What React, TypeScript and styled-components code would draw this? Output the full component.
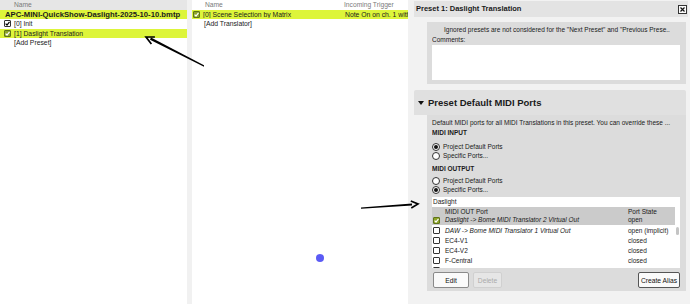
import styled, { createGlobalStyle } from "styled-components";

const YELLOW = "#ddf53a";

const GlobalStyle = createGlobalStyle`
  html, body {
    margin: 0;
    padding: 0;
  }
  body {
    width: 690px;
    height: 304px;
    overflow: hidden;
    background: #fff;
    color: #1a1a1a;
    font-family: "Liberation Sans", Arial, sans-serif;
    font-size: 6.7px;
  }
`;

const Page = styled.div`
  position: relative;
  display: flex;
  height: 304px;
`;

const Pane = styled.div<{ $width: number }>`
  width: ${(p) => p.$width}px;
  flex-shrink: 0;
  display: flex;
  flex-direction: column;
  background: #fff;
  overflow: hidden;
`;

const Splitter = styled.div`
  width: 5px;
  flex-shrink: 0;
  background: #f1f1f1;
`;

const HeaderRow = styled.div<{ $bg?: string }>`
  height: 9.5px;
  display: flex;
  align-items: center;
  background: ${(p) => p.$bg || "transparent"};
  color: #7a7a7a;
  white-space: nowrap;
`;

const HeaderCell = styled.div<{ $width?: number; $indent?: number }>`
  width: ${(p) => (p.$width ? `${p.$width}px` : "auto")};
  padding-left: ${(p) => p.$indent ?? 0}px;
  box-sizing: border-box;
  flex-shrink: 0;
`;

const Row = styled.div<{ $hl?: boolean; $bold?: boolean; $indent?: number }>`
  height: 9.5px;
  display: flex;
  align-items: center;
  gap: 3px;
  padding-left: ${(p) => p.$indent ?? 0}px;
  background: ${(p) => (p.$hl ? YELLOW : "transparent")};
  font-weight: ${(p) => (p.$bold ? "bold" : "normal")};
  font-size: ${(p) => (p.$bold ? "7.7px" : "6.8px")};
  white-space: nowrap;
  overflow: hidden;
`;

const Cell = styled.span<{ $width: number }>`
  width: ${(p) => p.$width}px;
  flex-shrink: 0;
  overflow: hidden;
  white-space: nowrap;
`;

const Box = styled.span<{ $on?: boolean; $green?: boolean }>`
  width: 5px;
  height: 5px;
  flex-shrink: 0;
  display: inline-flex;
  align-items: center;
  justify-content: center;
  border: 1px solid ${(p) => (p.$green ? "#5f7418" : "#333")};
  border-radius: 1px;
  background: ${(p) => (p.$green ? "#8ea52a" : "#fff")};
  svg {
    display: ${(p) => (p.$on ? "block" : "none")};
  }
`;

const Check = ({ on, green }: { on?: boolean; green?: boolean }) => (
  <Box $on={on} $green={green}>
    <svg width="5" height="5" viewBox="0 0 5 5">
      <path d="M0.6 2.6 L2 4 L4.5 0.8" fill="none" stroke={green ? "#fff" : "#000"} strokeWidth="1.2" />
    </svg>
  </Box>
);

const RightPane = styled.div`
  flex: 1;
  display: flex;
  flex-direction: column;
  background: #f2f2f2;
  padding: 1px 2px 0 6px;
  overflow: hidden;
`;

const TitleBar = styled.div`
  height: 16px;
  flex-shrink: 0;
  display: flex;
  align-items: center;
  justify-content: space-between;
  padding: 0 1px 0 2px;
  background: #e3e3e3;
  font-weight: bold;
  font-size: 7.5px;
  line-height: 10px;
`;

const CloseBtn = styled.span`
  width: 7px;
  height: 7px;
  display: flex;
  align-items: center;
  justify-content: center;
  border: 1px solid #333;
  background: #fafafa;
  svg {
    display: block;
  }
`;

const Card = styled.div<{ $top?: number }>`
  margin: ${(p) => p.$top ?? 0}px 2px 0 13px;
  padding: 3px 6px 3px 5px;
  background: #dcdcdc;
  display: flex;
  flex-direction: column;
  flex-shrink: 0;
`;

const Line = styled.div<{ $indent?: number; $bold?: boolean; $top?: number }>`
  height: 10px;
  line-height: 10px;
  padding-left: ${(p) => p.$indent ?? 0}px;
  margin-top: ${(p) => p.$top ?? 0}px;
  font-weight: ${(p) => (p.$bold ? "bold" : "normal")};
  font-size: 6.5px;
  white-space: nowrap;
  overflow: hidden;
`;

const TextArea = styled.div`
  height: 35px;
  background: #fff;
  margin-bottom: 1px;
`;

const SectionHeader = styled.div`
  margin: 6px 2px 0 0;
  height: 25px;
  flex-shrink: 0;
  display: flex;
  align-items: center;
  gap: 4px;
  padding-left: 4px;
  background: #e0e0e0;
  border-radius: 2px 2px 0 0;
  font-weight: bold;
  font-size: 9.5px;
`;

const Triangle = styled.span`
  width: 0;
  height: 0;
  border-left: 3px solid transparent;
  border-right: 3px solid transparent;
  border-top: 4px solid #111;
`;

const RadioRow = styled.div<{ $top?: number }>`
  height: 9px;
  display: flex;
  align-items: center;
  gap: 3px;
  margin-top: ${(p) => p.$top ?? 0}px;
  font-size: 6.5px;
`;

const RadioDot = styled.span<{ $on?: boolean }>`
  width: 6px;
  height: 6px;
  border: 1px solid #333;
  border-radius: 50%;
  background: #fff;
  display: inline-flex;
  align-items: center;
  justify-content: center;
  &::after {
    content: "";
    width: 4px;
    height: 4px;
    border-radius: 50%;
    background: ${(p) => (p.$on ? "#111" : "transparent")};
  }
`;

const FilterInput = styled.div`
  margin-top: 3px;
  height: 10px;
  line-height: 10px;
  padding-left: 1px;
  background: #fff;
  font-size: 6.5px;
`;

const List = styled.div`
  display: flex;
  height: 61px;
  background: #fff;
  overflow: hidden;
`;

const Table = styled.div`
  flex: 1;
  display: flex;
  flex-direction: column;
  overflow: hidden;
  font-size: 6.5px;
`;

const TableHead = styled.div`
  height: 17px;
  flex-shrink: 0;
  background: #cbcbcb;
  display: grid;
  grid-template-columns: 13px 183px 1fr;
  grid-template-rows: 8px 8px;
  align-items: center;
  padding-top: 1px;
  line-height: 8px;
`;

const TableRow = styled.div`
  height: 10px;
  flex-shrink: 0;
  display: grid;
  grid-template-columns: 13px 183px 1fr;
  align-items: center;
  white-space: nowrap;
`;

const BoxCell = styled.span`
  padding-left: 1px;
  display: flex;
  align-items: center;
`;

const Italic = styled.span`
  font-style: italic;
  white-space: nowrap;
`;

const Scrollbar = styled.div`
  width: 5px;
  flex-shrink: 0;
  padding-top: 20px;
  background: #fff;
`;

const Thumb = styled.div`
  width: 3px;
  height: 8px;
  margin-left: 1px;
  border-radius: 2px;
  background: #c4c4c4;
`;

const ButtonRow = styled.div`
  margin-top: 4px;
  height: 16px;
  display: flex;
  gap: 4px;
  padding-left: 1px;
`;

const Button = styled.div<{ $width: number; $disabled?: boolean; $dark?: boolean }>`
  width: ${(p) => p.$width}px;
  height: 14px;
  display: flex;
  align-items: center;
  justify-content: center;
  border: 1px solid ${(p) => (p.$disabled ? "#d0d0d0" : p.$dark ? "#555" : "#8a8a8a")};
  border-radius: 2px;
  background: ${(p) => (p.$disabled ? "#e6e6e6" : "#fafafa")};
  color: ${(p) => (p.$disabled ? "#aaa" : "#111")};
  font-size: 6.7px;
  line-height: 9px;
`;

const Spacer = styled.div`
  flex: 1;
`;

const Overlay = styled.svg`
  position: absolute;
  left: 0;
  top: 0;
  pointer-events: none;
`;

const ports = [
  { name: "DAW -> Bome MIDI Translator 1 Virtual Out", state: "open (implicit)", italic: true },
  { name: "EC4-V1", state: "closed" },
  { name: "EC4-V2", state: "closed" },
  { name: "F-Central", state: "closed" },
  { name: "F-Int", state: "closed" },
];

const App = () => {
  return (
    <>
      <GlobalStyle />
      <Page>
        <Pane $width={187}>
          <HeaderRow $bg="#e6e6e6">
            <HeaderCell $indent={14}>Name</HeaderCell>
          </HeaderRow>
          <Row $hl $bold $indent={5}>
            APC-MINI-QuickShow-Daslight-2025-10-10.bmtp
          </Row>
          <Row $indent={4}>
            <Check on />
            [0] Init
          </Row>
          <Row $hl $indent={4}>
            <Check on green />
            [1] Daslight Translation
          </Row>
          <Row $indent={14}>[Add Preset]</Row>
        </Pane>
        <Splitter />
        <Pane $width={216}>
          <HeaderRow>
            <HeaderCell $width={152} $indent={13}>
              Name
            </HeaderCell>
            <HeaderCell>Incoming Trigger</HeaderCell>
          </HeaderRow>
          <Row $hl $indent={1}>
            <Check on green />
            <Cell $width={139}>[0] Scene Selection by Matrix</Cell>
            <Cell $width={64}>Note On on ch. 1 with any note</Cell>
          </Row>
          <Row $indent={12}>[Add Translator]</Row>
        </Pane>
        <RightPane>
          <TitleBar>
            Preset 1: Daslight Translation
            <CloseBtn>
              <svg width="5" height="5" viewBox="0 0 5 5">
                <path d="M0.5 0.5 L4.5 4.5 M4.5 0.5 L0.5 4.5" stroke="#111" strokeWidth="1.2" />
              </svg>
            </CloseBtn>
          </TitleBar>
          <Card $top={5}>
            <Line $indent={12}>
              Ignored presets are not considered for the "Next Preset" and "Previous Prese..
            </Line>
            <Line>Comments:</Line>
            <TextArea />
          </Card>
          <SectionHeader>
            <Triangle />
            Preset Default MIDI Ports
          </SectionHeader>
          <Card>
            <Line>Default MIDI ports for all MIDI Translations in this preset. You can override these ...</Line>
            <Line $bold>MIDI INPUT</Line>
            <RadioRow $top={4}>
              <RadioDot $on />
              Project Default Ports
            </RadioRow>
            <RadioRow>
              <RadioDot />
              Specific Ports...
            </RadioRow>
            <Line $bold $top={4}>
              MIDI OUTPUT
            </Line>
            <RadioRow $top={2}>
              <RadioDot />
              Project Default Ports
            </RadioRow>
            <RadioRow>
              <RadioDot $on />
              Specific Ports...
            </RadioRow>
            <FilterInput>Daslight</FilterInput>
            <List>
              <Table>
                <TableHead>
                  <span />
                  <span>MIDI OUT Port</span>
                  <span>Port State</span>
                  <BoxCell>
                    <Check on green />
                  </BoxCell>
                  <Italic>Daslight -&gt; Bome MIDI Translator 2 Virtual Out</Italic>
                  <span>open</span>
                </TableHead>
                {ports.map((port) => (
                  <TableRow key={port.name}>
                    <BoxCell>
                      <Check />
                    </BoxCell>
                    {port.italic ? <Italic>{port.name}</Italic> : <span>{port.name}</span>}
                    <span>{port.state}</span>
                  </TableRow>
                ))}
              </Table>
              <Scrollbar>
                <Thumb />
              </Scrollbar>
            </List>
            <ButtonRow>
              <Button $width={34}>Edit</Button>
              <Button $width={27} $disabled>
                Delete
              </Button>
              <Spacer />
              <Button $width={40} $dark>
                Create Alias
              </Button>
            </ButtonRow>
          </Card>
        </RightPane>
        <Overlay width="690" height="304" viewBox="0 0 690 304">
          <path d="M204 66.8 L150 39.8 L151 37.4 L204 65.2 Z" fill="#000" />
          <polyline points="154.9,37 146,37 151.4,44.1" fill="none" stroke="#000" strokeWidth="1.7" />
          <path d="M361 208.8 L412 205.6 L412 203.4 L361 207.4 Z" fill="#000" />
          <polyline points="410.8,201 418,204 411.3,208" fill="none" stroke="#000" strokeWidth="1.7" />
          <circle cx="320" cy="258" r="4" fill="#5b5bf5" />
        </Overlay>
      </Page>
    </>
  );
};

export default App;
